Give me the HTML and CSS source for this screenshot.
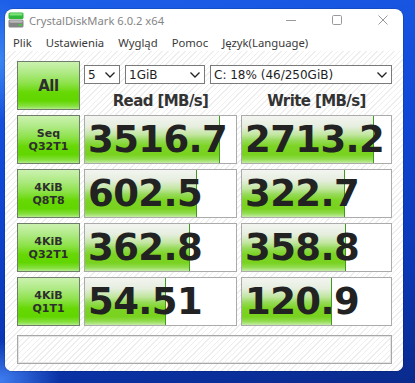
FILE: index.html
```html
<!DOCTYPE html>
<html lang="pl">
<head>
<meta charset="utf-8">
<title>CrystalDiskMark 6.0.2 x64</title>
<link rel="stylesheet" href="styles.css">
</head>
<body>
<div class="window">
  <div class="titlebar">
    <svg class="app-icon" viewBox="0 0 16 16">
      <rect x="0.5" y="0.5" width="15" height="6.5" rx="1.5" fill="#2fb83a"/>
      <rect x="1.5" y="1.2" width="13" height="2.3" rx="1" fill="#7ee27a"/>
      <rect x="0.5" y="7.5" width="15" height="8" rx="1.5" fill="#858585"/>
      <rect x="1.5" y="8.2" width="13" height="2.6" rx="0.8" fill="#b8b8b8"/>
      <rect x="10.5" y="12" width="3.5" height="1.8" rx="0.6" fill="#3ed13d"/>
    </svg>
    <span class="title">CrystalDiskMark 6.0.2 x64</span>
    <div class="controls">
      <div class="ctl"><svg viewBox="0 0 10 10"><line x1="0" y1="5.5" x2="10" y2="5.5"/></svg></div>
      <div class="ctl"><svg viewBox="0 0 10 10"><rect x="0.5" y="0.5" width="9" height="9" rx="1.2"/></svg></div>
      <div class="ctl"><svg viewBox="0 0 10 10"><path d="M0.5 0.5 L9.5 9.5 M9.5 0.5 L0.5 9.5"/></svg></div>
    </div>
  </div>
  <div class="menubar">
    <span>Plik</span><span>Ustawienia</span><span>Wygląd</span><span>Pomoc</span><span>Język(Language)</span>
  </div>
  <div class="content">
    <div class="grid">
      <div class="btn all">All</div>
      <div class="head">
        <div class="selects">
          <div class="combo c-count"><span>5</span><svg viewBox="0 0 10 6"><path d="M0.5 0.5 L5 5 L9.5 0.5"/></svg></div>
          <div class="combo c-size"><span>1GiB</span><svg viewBox="0 0 10 6"><path d="M0.5 0.5 L5 5 L9.5 0.5"/></svg></div>
          <div class="combo c-drive"><span>C: 18% (46/250GiB)</span><svg viewBox="0 0 10 6"><path d="M0.5 0.5 L5 5 L9.5 0.5"/></svg></div>
        </div>
        <div class="headers">
          <div class="hd">Read [MB/s]</div>
          <div class="hd">Write [MB/s]</div>
        </div>
      </div>

      <div class="btn label">Seq<br>Q32T1</div>
      <div class="cell"><div class="fill" style="width:89.4%"></div><span class="val">3516.7</span></div>
      <div class="cell"><div class="fill" style="width:88.6%"></div><span class="val">2713.2</span></div>

      <div class="btn label">4KiB<br>Q8T8</div>
      <div class="cell"><div class="fill" style="width:74%"></div><span class="val">602.5</span></div>
      <div class="cell"><div class="fill" style="width:69%"></div><span class="val">322.7</span></div>

      <div class="btn label">4KiB<br>Q32T1</div>
      <div class="cell"><div class="fill" style="width:69.5%"></div><span class="val">362.8</span></div>
      <div class="cell"><div class="fill" style="width:70%"></div><span class="val">358.8</span></div>

      <div class="btn label">4KiB<br>Q1T1</div>
      <div class="cell"><div class="fill" style="width:53.6%"></div><span class="val">54.51</span></div>
      <div class="cell"><div class="fill" style="width:60.4%"></div><span class="val">120.9</span></div>
    </div>
    <div class="comment"></div>
  </div>
</div>
</body>
</html>
```
FILE: styles.css
```css
html, body {
  margin: 0;
  padding: 0;
}
body {
  width: 415px;
  height: 383px;
  overflow: hidden;
  background:
    radial-gradient(ellipse 60px 40px at 0px 380px, #3f7df0 0%, rgba(63,125,240,0) 100%),
    radial-gradient(ellipse 30px 60px at 0px 60px, #3a86f2 0%, rgba(58,134,242,0) 100%),
    linear-gradient(170deg, #1d5fe8 0%, #1048d6 40%, #0a37b4 75%, #0a2a8c 100%);
}
.window {
  margin: 9px 0 0 5px;
  width: 398px;
  height: 362px;
  background: #fff;
  border-radius: 8px 8px 7px 7px;
  overflow: hidden;
  box-shadow: 0 0 0 1px rgba(0, 0, 0, 0.12);
  display: flex;
  flex-direction: column;
  font-family: "DejaVu Sans", sans-serif;
}
.titlebar {
  height: 24px;
  flex: none;
  display: flex;
  align-items: center;
  padding: 0 0 2px 3px;
  box-sizing: border-box;
}
.app-icon {
  width: 16px;
  height: 16px;
  margin-right: 5px;
  flex: none;
}
.title {
  font-family: "Noto Sans", sans-serif;
  font-size: 11.2px;
  color: #858585;
}
.controls {
  margin-left: auto;
  margin-right: -3px;
  display: flex;
  align-self: stretch;
}
.ctl {
  width: 46px;
  display: flex;
  align-items: center;
  justify-content: center;
}
.ctl svg {
  width: 10px;
  height: 10px;
  fill: none;
  stroke: #9a9a9a;
  stroke-width: 1;
}
.menubar {
  height: 18px;
  flex: none;
  display: flex;
  align-items: center;
  gap: 14px;
  padding-left: 8px;
  font-family: "Noto Sans", sans-serif;
  font-size: 11.3px;
  color: #3a3a3a;
}
.content {
  flex: 1;
  padding: 10px 0 0 12px;
  background: repeating-linear-gradient(135deg, #ffffff 0px, #ffffff 3px, #eeeeee 3px, #eeeeee 4px);
}
.grid {
  display: grid;
  grid-template-columns: 63px 153px 151px;
  grid-auto-rows: 49px;
  column-gap: 4px;
  row-gap: 5px;
}
.btn {
  box-sizing: border-box;
  border: 1px solid #6f7d6b;
  background: linear-gradient(to bottom, #cbf2b0 0%, #b0ea86 22%, #8ee24c 45%, #66d804 65%, #62d600 82%, #86e040 94%, #b4eb8c 100%);
  display: flex;
  align-items: center;
  justify-content: center;
  text-align: center;
  color: #2e2e2e;
  font-weight: bold;
}
.all {
  font-size: 15px;
  letter-spacing: -0.4px;
}
.label {
  font-size: 11px;
  line-height: 13px;
}
.head {
  grid-column: 2 / 4;
  display: flex;
  flex-direction: column;
}
.selects {
  margin-top: 4px;
  display: flex;
  gap: 5px;
  height: 19px;
}
.combo {
  box-sizing: border-box;
  height: 19px;
  border: 1px solid #7a7a7a;
  background: #fff;
  display: flex;
  align-items: center;
  padding: 0 4px 0 3px;
  font-size: 12px;
  color: #1e1e1e;
}
.combo svg {
  width: 10px;
  height: 6px;
  margin-left: auto;
  fill: none;
  stroke: #222;
  stroke-width: 1.3;
}
.c-count { width: 36px; }
.c-size { width: 80px; }
.c-drive { width: 182px; }
.headers {
  margin-top: 8px;
  display: grid;
  grid-template-columns: 153px 151px;
  column-gap: 4px;
  height: 18px;
  line-height: 18px;
}
.hd {
  text-align: center;
  font-weight: bold;
  font-size: 15px;
  letter-spacing: -0.6px;
  color: #333;
}
.cell {
  position: relative;
  box-sizing: border-box;
  border: 1px solid #ababab;
  background: #fff;
  overflow: hidden;
}
.fill {
  position: absolute;
  left: 0;
  top: 0;
  bottom: 0;
  box-sizing: border-box;
  border-right: 1px solid #3f9a1e;
  background: linear-gradient(to bottom, #f3f5f1 0%, #e6eedf 22%, #c2e6a0 40%, #96da58 52%, #7cd424 64%, #78d21e 82%, #92dc50 92%, #c4eca4 100%);
}
.val {
  position: relative;
  display: block;
  padding-left: 3px;
  font-weight: bold;
  font-size: 37px;
  line-height: 47px;
  letter-spacing: -0.6px;
  color: #222;
}
.comment {
  margin-top: 9px;
  width: 375px;
  height: 29px;
  box-sizing: border-box;
  border: 1px solid #a8a8a8;
  box-shadow: inset 0 0 0 1px #e4e4e4;
}
```
